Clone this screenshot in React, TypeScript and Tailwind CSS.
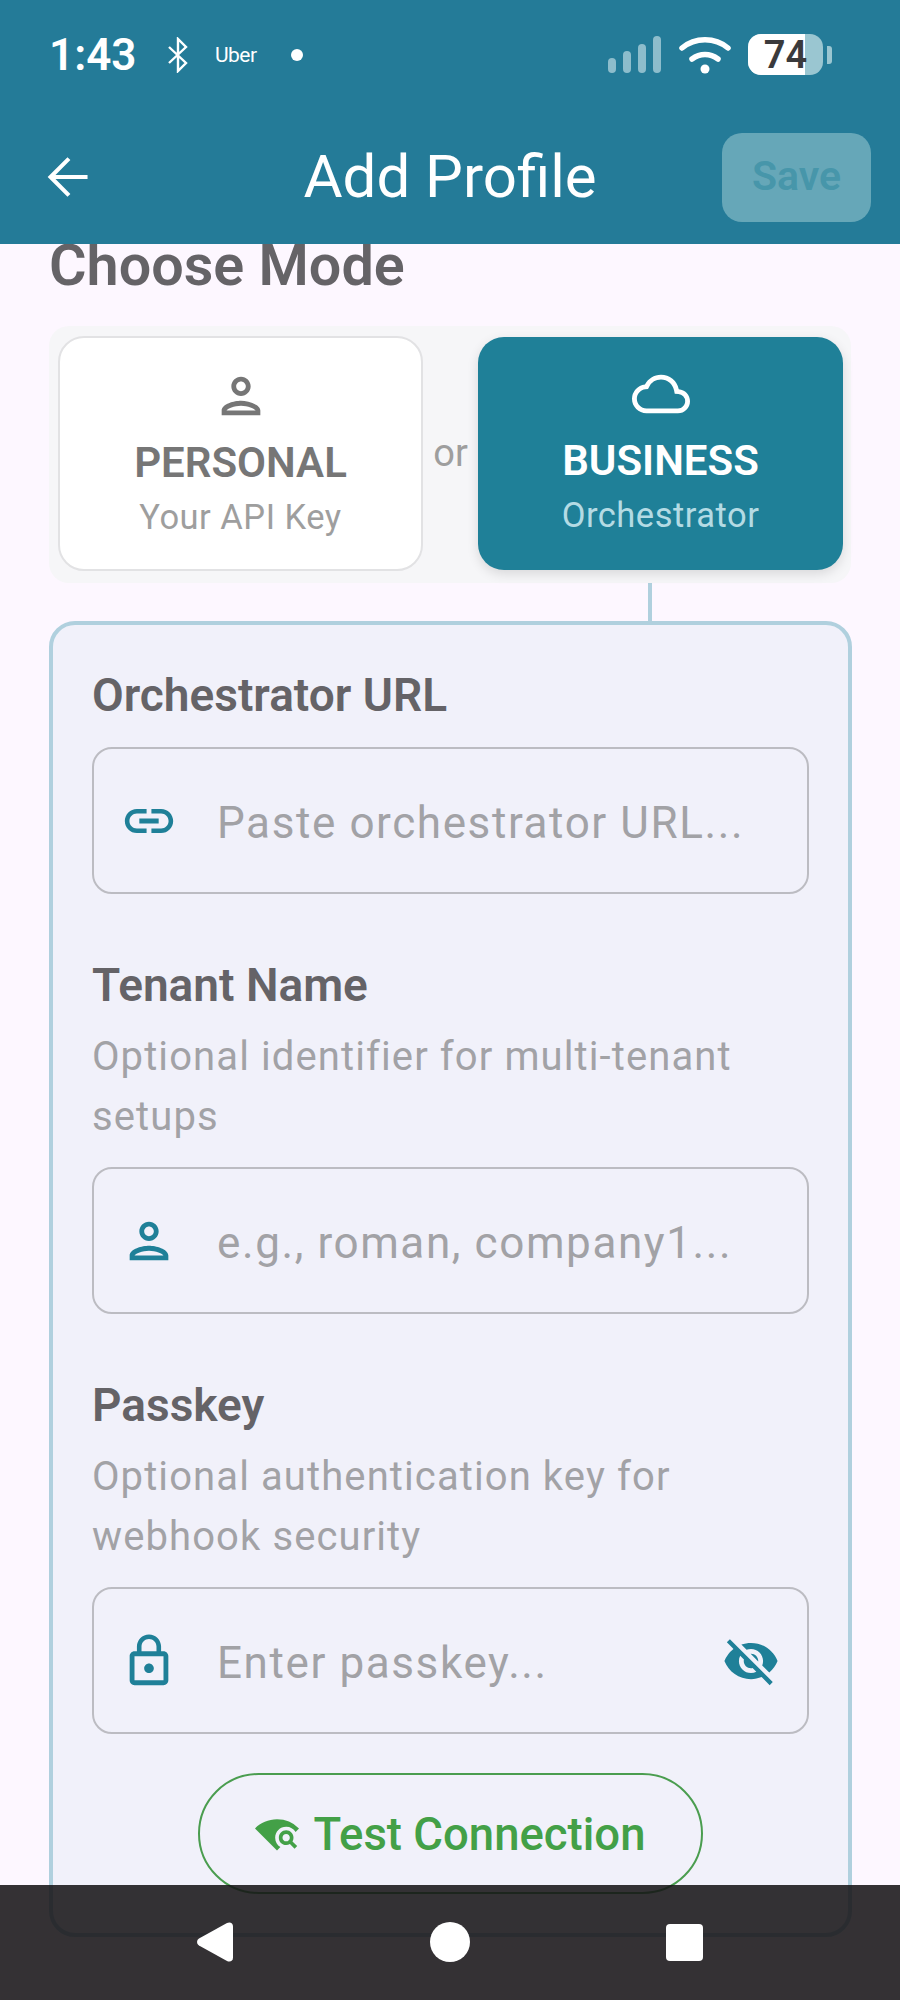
import React from 'react';
import {
  MdLink,
  MdLockOutline,
  MdOutlineCloud,
  MdOutlinePerson,
  MdVisibilityOff,
  MdWifiFind,
} from 'react-icons/md';

const StatusBar = () => {
  return (
    <div className="h-[100px] flex items-center justify-between pl-[49px] pr-[68px] pt-[9px] text-white">
      <div className="flex items-center">
        <span className="text-[44px] leading-none font-semibold w-[118px]">1:43</span>
        <svg width="22" height="36" viewBox="0 0 22 36" fill="none" stroke="white" strokeWidth="2.4">
          <path d="M2 10l17 16-8 8V2l8 8L2 26" />
        </svg>
        <span className="ml-[26px] w-[76px] text-[21px] leading-none tracking-tight mt-[2px]">Uber</span>
        <span className="w-3 h-3 rounded-full bg-white" />
      </div>
      <div className="flex items-center">
        <svg width="54" height="38" viewBox="0 0 54 38" fill="#8dbdcc">
          <rect x="0" y="22" width="8" height="15" rx="4" />
          <rect x="15" y="15" width="8" height="22" rx="4" />
          <rect x="30" y="8" width="8" height="29" rx="4" />
          <rect x="45" y="0" width="8" height="37" rx="4" />
        </svg>
        <svg className="ml-[17px]" width="52" height="38" viewBox="0 0 52 38" fill="none" stroke="white" strokeWidth="5.5" strokeLinecap="round">
          <path d="M3 12C16 1 36 1 49 12" />
          <path d="M13 23c8-6 18-6 26 0" />
          <circle cx="26" cy="33" r="4.5" fill="white" stroke="none" />
        </svg>
        <div className="ml-[17px] relative w-[75px] h-[41px] rounded-[13px] overflow-hidden bg-[#9ac6d1]">
          <div className="absolute left-0 top-0 bottom-0 w-[57px] bg-white" />
          <span className="absolute inset-0 flex items-center justify-center text-[#3a3a3c] text-[38px] font-semibold leading-none">74</span>
        </div>
        <div className="ml-[4px] w-[5px] h-[18px] rounded-r-[3px] bg-[#9ac6d1]" />
      </div>
    </div>
  );
};

const AppBar = () => {
  return (
    <div className="relative z-10 bg-[#247b98] h-[244px] shrink-0">
      <StatusBar />
      <div className="h-[144px] flex items-center justify-between pl-[39px] pr-[29px] relative pt-[10px]">
        <svg className="ml-[-1px]" width="58" height="58" viewBox="0 0 24 24" fill="none" stroke="white" strokeWidth="1.7">
          <path d="M20.500 12H6M12.800 4.400L5.200 12l7.600 7.600" />
        </svg>
        <span className="absolute left-0 right-0 text-center text-white text-[60px] leading-none">Add Profile</span>
        <div className="w-[149px] h-[89px] rounded-[20px] bg-[#66a7b8] flex items-center justify-center text-[#4796aa] text-[41px] font-semibold">
          Save
        </div>
      </div>
    </div>
  );
};

type ModeCardProps = {
  icon: React.ReactNode;
  title: string;
  subtitle: string;
  active?: boolean;
};

const ModeCard = ({ icon, title, subtitle, active }: ModeCardProps) => {
  return (
    <div
      className={`w-[365px] rounded-[26px] flex flex-col items-center ${
        active
          ? 'mt-[1px] h-[233px] pt-[28px] bg-[#1f8098] shadow-[0_4px_12px_rgba(0,0,0,0.12)]'
          : 'h-[235px] pt-[29px] bg-white border-2 border-[#e2e2e4]'
      }`}
    >
      {icon}
      <span className={`mt-[13px] text-[42px] leading-[50px] font-semibold ${active ? 'text-white' : 'text-[#767676]'}`}>
        {title}
      </span>
      <span className={`mt-[7px] text-[34.5px] leading-[44px] tracking-[0.5px] ${active ? 'text-[#b4dbe4]' : 'text-[#9e9e9e]'}`}>
        {subtitle}
      </span>
    </div>
  );
};

type FieldProps = {
  label: string;
  help?: string[];
  icon: React.ReactNode;
  placeholder: string;
  trailing?: React.ReactNode;
  first?: boolean;
};

const Field = ({ label, help, icon, placeholder, trailing, first }: FieldProps) => {
  return (
    <div className={first ? '' : 'mt-[66px]'}>
      <div className="text-[46px] leading-[50px] font-semibold text-[#656367]">{label}</div>
      {help && (
        <div className="mt-[17px] text-[40px] leading-[60px] tracking-[1.1px] text-[#a2a2a6]">
          {help.map((line) => (
            <div key={line}>{line}</div>
          ))}
        </div>
      )}
      <div
        className={`h-[147px] rounded-[20px] border-2 border-[#bcbcc2] flex items-center pl-[26px] pr-[27px] ${
          help ? 'mt-[20px]' : 'mt-[27px]'
        }`}
      >
        <span className="w-[58px] h-[58px] shrink-0 text-[#1f8098]">{icon}</span>
        <span className="ml-[39px] flex-1 text-[44px] tracking-[1.6px] text-[#a2a2a6] whitespace-nowrap mt-[4px]">{placeholder}</span>
        {trailing}
      </div>
    </div>
  );
};

const App = () => {
  return (
    <div className="relative w-[900px] h-[2000px] overflow-hidden bg-[#fdf7ff] flex flex-col font-['Roboto',sans-serif]">
      <AppBar />
      <main className="px-[49px] mt-[-3px]">
        <h2 className="text-[57.500px] leading-[50px] font-semibold text-[#656367]">Choose Mode</h2>

        <div className="mt-[35px] h-[257px] rounded-[20px] bg-[#f6f6f8] flex items-start justify-between pt-[10px] pl-[9px] pr-[8px]">
          <ModeCard
            icon={<MdOutlinePerson size={58} color="#767676" />}
            title="PERSONAL"
            subtitle="Your API Key"
          />
          <span className="text-[38px] text-[#9e9e9e] leading-none mt-[98px]">or</span>
          <ModeCard
            active
            icon={<MdOutlineCloud size={58} color="white" />}
            title="BUSINESS"
            subtitle="Orchestrator"
          />
        </div>

        <div className="w-[4px] h-[38px] bg-[#b0d0de] ml-[599px]" />

        <section className="w-[803px] rounded-[26px] border-4 border-[#b0d0de] bg-[#f1f1fa] pt-[45px] pb-[39px] px-[39px]">
          <Field
            first
            label="Orchestrator URL"
            icon={<MdLink size={58} />}
            placeholder="Paste orchestrator URL..."
          />
          <Field
            label="Tenant Name"
            help={['Optional identifier for multi-tenant', 'setups']}
            icon={<MdOutlinePerson size={58} />}
            placeholder="e.g., roman, company1..."
          />
          <Field
            label="Passkey"
            help={['Optional authentication key for', 'webhook security']}
            icon={<MdLockOutline size={58} />}
            placeholder="Enter passkey..."
            trailing={<MdVisibilityOff size={58} color="#1f8098" className="shrink-0" />}
          />
          <div className="mt-[39px] mx-auto w-[505px] h-[121px] rounded-full border-2 border-[#4a9d4f] flex items-center justify-center text-[#43a047]">
            <MdWifiFind size={44} />
            <span className="ml-[14px] text-[45.500px] font-medium leading-none mt-[3px]">Test Connection</span>
          </div>
        </section>
      </main>

      {/* translucent nav bar, the panel shows through it a little */}
      <div className="absolute left-0 right-0 bottom-0 h-[115px] bg-[#161416]/87">
        <svg className="absolute left-[197px] top-[37px]" width="36" height="40" viewBox="0 0 36 40" fill="white">
          <path d="M2 16.500L30 1c3-1.500 6 0 6 3.500v31c0 3.500-3 5-6 3.500L2 23.500c-2.600-1.500-2.600-5.500 0-7z" />
        </svg>
        <div className="absolute left-[430px] top-[37px] w-[40px] h-[40px] rounded-full bg-white" />
        <div className="absolute left-[666px] top-[39px] w-[37px] h-[37px] rounded-[4px] bg-white" />
      </div>
    </div>
  );
};

export default App;
